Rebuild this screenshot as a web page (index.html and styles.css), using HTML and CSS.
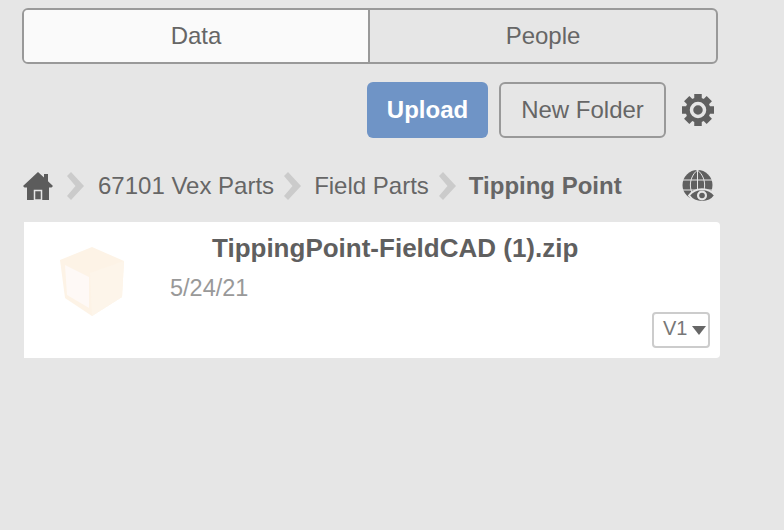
FILE: index.html
```html
<!DOCTYPE html>
<html lang="en">
<head>
    <meta charset="utf-8">
    <title>Data Panel</title>
    <link rel="stylesheet" href="styles.css">
</head>
<body>
    <div class="panel">
        <div class="tabs">
            <div class="tab tab-active">Data</div>
            <div class="tab">People</div>
        </div>

        <div class="actions">
            <button class="btn btn-upload">Upload</button>
            <button class="btn btn-folder">New Folder</button>
            <svg class="gear" viewBox="0 0 32 32" width="32" height="32">
                <g stroke="#606060" stroke-width="7.500">
                    <path d="M16 0V32M0 16H32M4.700 4.700L27.300 27.300M27.300 4.700L4.700 27.300"/>
                </g>
                <circle cx="16" cy="16" r="12.500" fill="#606060"/>
                <circle cx="16" cy="16" r="6.500" fill="none" stroke="#e6e6e6" stroke-width="3.500"/>
            </svg>
        </div>

        <div class="crumbs">
            <svg class="home" viewBox="0 0 30 28" width="30" height="28">
                <path fill="#5c5c5c" d="M15 0 L21 5.500 V2 H25 V9.200 L30 14 L28.500 15.500 H26 V28 H4 V15.500 H1.500 L0 14 Z"/>
                <rect x="11.500" y="18.500" width="7" height="9.500" fill="#5c5c5c" stroke="#e6e6e6" stroke-width="1.500"/>
            </svg>
            <svg class="chev chev-first" viewBox="0 0 18 28" width="18" height="28">
                <path fill="#cbcbcb" d="M1 4 L5 0 L18 14 L5 28 L1 24 L9.500 14 Z"/>
            </svg>
            <span class="crumb">67101 Vex Parts</span>
            <svg class="chev" viewBox="0 0 18 28" width="18" height="28">
                <path fill="#cbcbcb" d="M1 4 L5 0 L18 14 L5 28 L1 24 L9.500 14 Z"/>
            </svg>
            <span class="crumb">Field Parts</span>
            <svg class="chev" viewBox="0 0 18 28" width="18" height="28">
                <path fill="#cbcbcb" d="M1 4 L5 0 L18 14 L5 28 L1 24 L9.500 14 Z"/>
            </svg>
            <span class="crumb crumb-current">Tipping Point</span>
            <svg class="globe" viewBox="0 0 34 34" width="34" height="34">
                <circle cx="15.500" cy="15" r="15" fill="#606060"/>
                <path fill="none" stroke="#e6e6e6" stroke-width="1" d="M0 10H31M0 20H31M15.500 0V30M15.500 0C6 8 6 22 15.500 30M15.500 0C25 8 25 22 15.500 30"/>
                <path fill="#606060" stroke="#e6e6e6" stroke-width="2" d="M7 25.500C13 17 27 17 33 25.500C27 34 13 34 7 25.500Z"/>
                <circle cx="20" cy="25.500" r="5" fill="#e6e6e6"/>
                <circle cx="20" cy="25.500" r="2.800" fill="#606060"/>
            </svg>
        </div>

        <div class="card">
            <div class="thumb">
                <svg viewBox="0 0 68 70" width="68" height="70">
                    <path fill="#fdf3e6" d="M34 0 L66 14 L64 50 L34 69 L7 51 L2 13 Z"/>
                    <path fill="#fdf5ea" d="M32 26 L66 14 L64 50 L34 69 Z"/>
                    <path fill="#fef9f6" d="M7 18 L31 30 L31 61 L9 48 Z"/>
                </svg>
            </div>
            <div class="info">
                <div class="file-name">TippingPoint-FieldCAD (1).zip</div>
                <div class="file-date">5/24/21</div>
                <div class="version"><span class="version-label">V1</span><span class="caret"></span></div>
            </div>
        </div>
    </div>
</body>
</html>
```

FILE: styles.css
```css
* {
    box-sizing: border-box;
}
body {
    margin: 0;
    height: 530px;
    overflow: hidden;
    background-color: #e6e6e6;
    font-family: "Liberation Sans", Arial, sans-serif;
    color: #606060;
}
.panel {
    width: 698px;
    margin-left: 22px;
    padding-top: 8px;
}
.tabs {
    display: flex;
    width: 696px;
    height: 56px;
    border: 2px solid #999;
    border-radius: 6px;
    overflow: hidden;
}
.tab {
    flex: 1;
    display: flex;
    align-items: center;
    justify-content: center;
    font-size: 24px;
    color: #666;
}
.tab-active {
    flex: none;
    width: 346px;
    background-color: #fafafa;
    border-right: 2px solid #999;
}
.actions {
    display: flex;
    align-items: center;
    justify-content: flex-end;
    margin-top: 18px;
    padding-right: 6px;
}
.btn {
    height: 56px;
    border-radius: 6px;
    font-family: inherit;
    font-size: 24px;
    text-align: center;
}
.btn-upload {
    width: 121px;
    border: none;
    background-color: #6f94c6;
    color: #fff;
    font-weight: bold;
}
.btn-folder {
    width: 167px;
    margin-left: 11px;
    border: 2px solid #999;
    background: none;
    color: #666;
}
.gear {
    margin-left: 16px;
}
.crumbs {
    display: flex;
    align-items: center;
    height: 34px;
    margin-top: 31px;
    margin-left: 1px;
    font-size: 24px;
    color: #666;
}
.home {
    flex: none;
}
.chev {
    flex: none;
    margin: 0 13px 0 9px;
}
.chev-first {
    margin: 0 14px 0 13px;
}
.crumb-current {
    font-weight: bold;
}
.globe {
    margin-left: auto;
    margin-right: 4px;
    margin-top: 2px;
}
.card {
    display: flex;
    width: 696px;
    height: 136px;
    margin-top: 19px;
    margin-left: 2px;
    background-color: #fff;
    border-radius: 0 4px 4px 0;
}
.thumb {
    flex: none;
    display: flex;
    justify-content: center;
    width: 136px;
    padding-top: 25px;
}
.info {
    position: relative;
    flex: 1;
    padding-left: 10px;
}
.file-name {
    margin-top: 11px;
    padding-left: 42px;
    font-size: 26px;
    font-weight: bold;
    line-height: 30px;
    color: #5f5f5f;
}
.file-date {
    margin-top: 10px;
    font-size: 23.500px;
    line-height: 30px;
    color: #999;
}
.version {
    position: absolute;
    right: 10px;
    bottom: 10px;
    display: flex;
    align-items: center;
    width: 58px;
    height: 36px;
    padding-left: 9px;
    border: 2px solid #ccc;
    border-radius: 4px;
    font-size: 20px;
    color: #777;
}
.version-label {
    margin-top: -3px;
}
.caret {
    width: 0;
    height: 0;
    margin-left: 5px;
    border-left: 7px solid transparent;
    border-right: 7px solid transparent;
    border-top: 9px solid #666;
}
```
